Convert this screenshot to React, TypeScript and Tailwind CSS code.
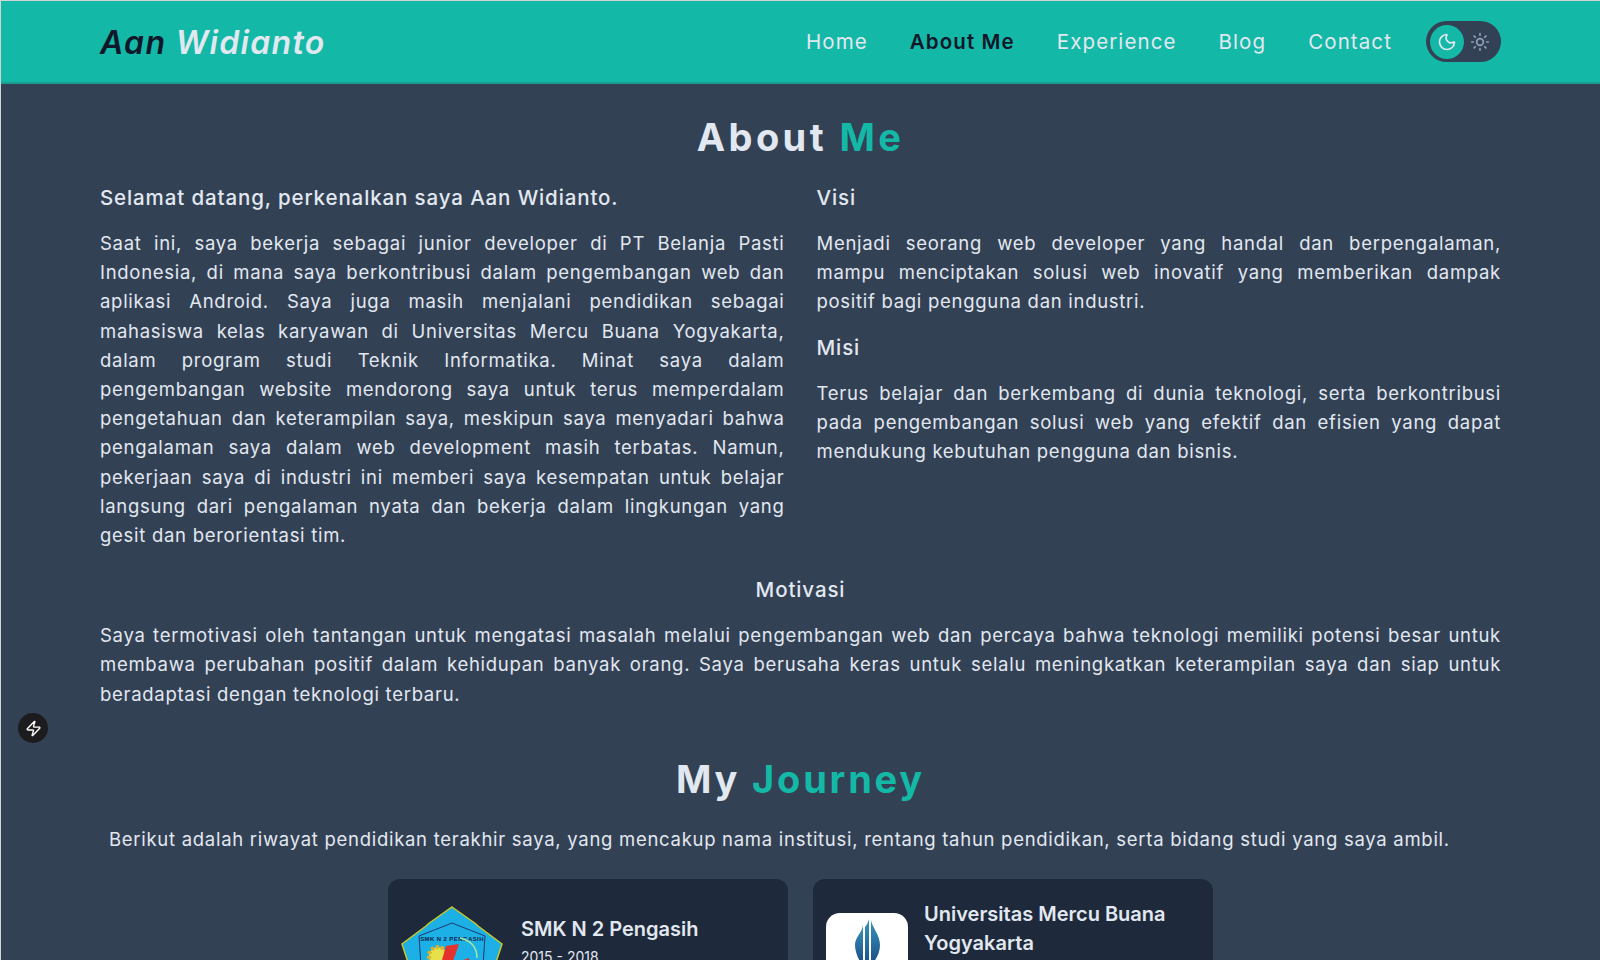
import { Moon, Sun, Zap } from "lucide-react";

const links = ["Home", "About Me", "Experience", "Blog", "Contact"];

function SmkLogo() {
  return (
    <svg viewBox="0 0 102 90" className="w-[102px] h-[90px] shrink-0">
      <polygon points="51,1 75,18 77,20 101,38 84,90 18,90 1,38 25,20 27,18" fill="#1cb0e6" stroke="#c6c62a" strokeWidth="1.5" />
      <polygon points="51,17 84,30 80,90 22,90 18,30" fill="none" stroke="#1d3a6e" strokeWidth="1" />
      <text x="51" y="35" textAnchor="middle" fontSize="6" fontWeight="700" letterSpacing="0.4" fill="#12234a" fontFamily="'Liberation Sans', sans-serif">SMK N 2 PENGASIH</text>
      <circle cx="37" cy="50" r="9" fill="#e8e04a" stroke="#d9b52a" strokeWidth="4" strokeDasharray="3 2" />
      <polygon points="45,40 58,38 51,58 68,52 70,66 36,72" fill="#e5322d" />
      <path d="M59 32 Q76 36 76 52" fill="none" stroke="#a7e8a0" strokeWidth="1.5" />
    </svg>
  );
}

function MercuLogo() {
  return (
    <div className="w-[82px] h-[82px] shrink-0 bg-white rounded-[14px] flex justify-center pt-[6px] self-start mt-[14px]">
      <svg viewBox="0 0 25 46" className="w-[25px] h-[46px]">
        <defs>
          <linearGradient id="mb" x1="0" y1="0" x2="0" y2="1">
            <stop offset="0" stopColor="#3a94bd" />
            <stop offset="1" stopColor="#1a4f86" />
          </linearGradient>
        </defs>
        <path d="M8 6 V44 H6 C2 38 0 31 0 26 C0 18 7 14 8 6Z" fill="url(#mb)" />
        <path d="M10 8 C12 6 13 3 14 0 V46 H10Z" fill="url(#mb)" />
        <path d="M16 1 C17 8 25 16 25 26 C25 33 22 39 18 44 H16Z" fill="url(#mb)" />
      </svg>
    </div>
  );
}

export default function App() {
  return (
    <div className="h-[960px] overflow-hidden bg-[#334155] text-[#e2e8f0] border-l border-t border-[#d4d4d4] font-['Inter',sans-serif] text-[18.5px] leading-[29.2px] tracking-[0.715px] relative">
      <nav className="h-[83px] bg-[#14b8a6] border-b-2 border-[#1a9e90] px-[99px] flex items-center justify-between">
        <a className="text-[32px] font-semibold italic tracking-[1.3px] pt-[2px]">
          <span className="text-[#0f172a]">Aan </span>
          <span>Widianto</span>
        </a>
        <div className="flex items-center">
          <ul className="flex gap-[42px] text-[20.5px] tracking-[1.1px]">
            {links.map((l) => (
              <li key={l} className={l === "About Me" ? "font-semibold text-[#0f172a]" : ""}>{l}</li>
            ))}
          </ul>
          <div className="ml-[34px] w-[75px] h-[41px] rounded-full bg-[#334155] flex items-center pl-[4px] gap-[6px]">
            <span className="w-[34px] h-[34px] rounded-full bg-[#14b8a6] flex items-center justify-center">
              <Moon size={20} />
            </span>
            <Sun size={20} className="text-slate-400" />
          </div>
        </div>
      </nav>

      <main className="px-[99px]">
        <h1 className="text-[38px] leading-[40px] font-bold text-center tracking-[3.4px] mt-[33px]">
          About <span className="text-[#14b8a6]">Me</span>
        </h1>
        <div className="grid grid-cols-2 gap-8 mt-[27px]">
          <div>
            <h2 className="text-[20.5px] leading-[28px] font-medium tracking-[0.88px]">Selamat datang, perkenalkan saya Aan Widianto.</h2>
            <p className="text-justify mt-[17px]">
              Saat ini, saya bekerja sebagai junior developer di PT Belanja Pasti Indonesia, di mana saya berkontribusi dalam pengembangan web dan aplikasi Android. Saya juga masih menjalani pendidikan sebagai mahasiswa kelas karyawan di Universitas Mercu Buana Yogyakarta, dalam program studi Teknik Informatika. Minat saya dalam pengembangan website mendorong saya untuk terus memperdalam pengetahuan dan keterampilan saya, meskipun saya menyadari bahwa pengalaman saya dalam web development masih terbatas. Namun, pekerjaan saya di industri ini memberi saya kesempatan untuk belajar langsung dari pengalaman nyata dan bekerja dalam lingkungan yang gesit dan berorientasi tim.
            </p>
          </div>
          <div>
            <h2 className="text-[20.5px] leading-[28px] font-medium tracking-[0.88px]">Visi</h2>
            <p className="text-justify mt-[17px]">
              Menjadi seorang web developer yang handal dan berpengalaman, mampu menciptakan solusi web inovatif yang memberikan dampak positif bagi pengguna dan industri.
            </p>
            <h2 className="text-[20.5px] leading-[28px] font-medium tracking-[0.88px] mt-[17px]">Misi</h2>
            <p className="text-justify mt-[17px]">
              Terus belajar dan berkembang di dunia teknologi, serta berkontribusi pada pengembangan solusi web yang efektif dan efisien yang dapat mendukung kebutuhan pengguna dan bisnis.
            </p>
          </div>
        </div>
        <h2 className="text-[20.5px] leading-[28px] font-medium tracking-[0.88px] text-center mt-[26px]">Motivasi</h2>
        <p className="text-justify mt-[17px]">
          Saya termotivasi oleh tantangan untuk mengatasi masalah melalui pengembangan web dan percaya bahwa teknologi memiliki potensi besar untuk membawa perubahan positif dalam kehidupan banyak orang. Saya berusaha keras untuk selalu meningkatkan keterampilan saya dan siap untuk beradaptasi dengan teknologi terbaru.
        </p>
        <h1 className="text-[38px] leading-[40px] font-bold text-center tracking-[2.8px] mt-[50px]">
          My <span className="text-[#14b8a6]">Journey</span>
        </h1>
        <p className="pl-[9px] mt-[26px]">
          Berikut adalah riwayat pendidikan terakhir saya, yang mencakup nama institusi, rentang tahun pendidikan, serta bidang studi yang saya ambil.
        </p>
        <div className="flex justify-center gap-[25px] mt-[25px] tracking-normal">
          <div className="w-[400px] h-[200px] bg-[#1e293b] rounded-xl flex gap-[18px] pl-[13px] pt-[27px]">
            <SmkLogo />
            <div className="pt-[9px]">
              <h3 className="text-[20px] leading-[29px] font-semibold">SMK N 2 Pengasih</h3>
              <p className="text-[14px] leading-[25px]">2015 - 2018</p>
            </div>
          </div>
          <div className="w-[400px] h-[200px] bg-[#1e293b] rounded-xl flex gap-[16px] pl-[13px] pt-[20px]">
            <MercuLogo />
            <h3 className="text-[20px] leading-[29px] font-semibold pt-[1px]">Universitas Mercu Buana Yogyakarta</h3>
          </div>
        </div>
      </main>

      <div className="absolute left-[17px] top-[712px] w-[30px] h-[30px] rounded-full bg-[#1c1c1e] flex items-center justify-center">
        <Zap size={17} className="text-white" />
      </div>
    </div>
  );
}
